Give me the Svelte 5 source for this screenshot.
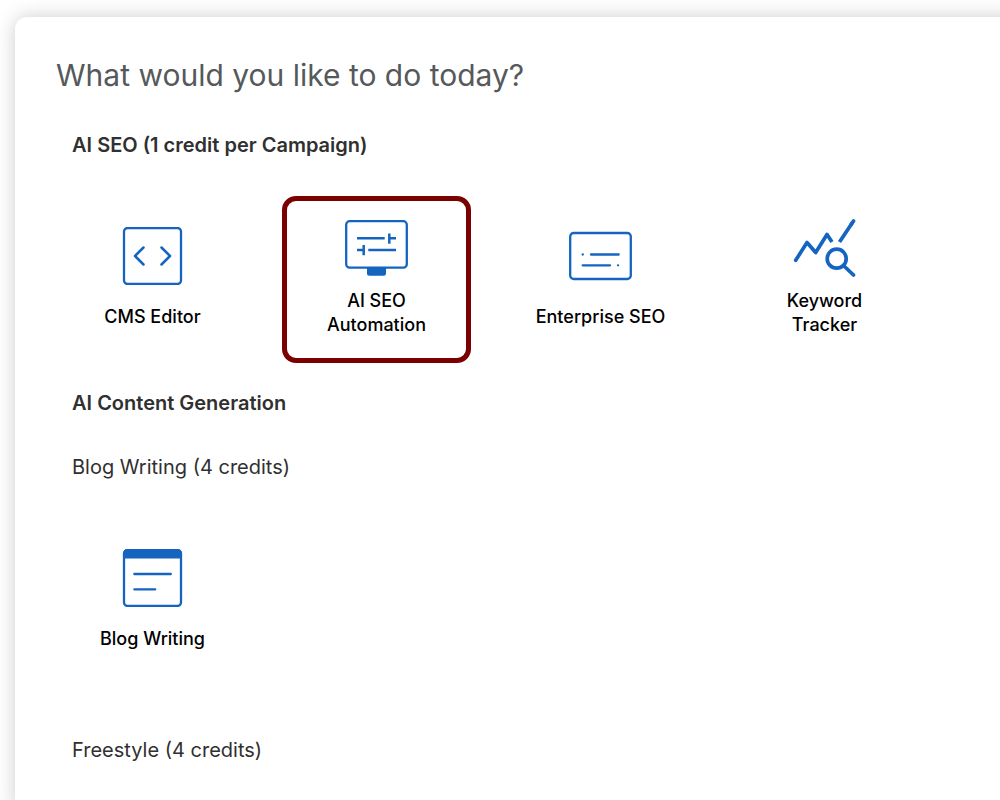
<script>
  const seoTools = [
    { id: 'cms', label: 'CMS Editor' },
    { id: 'automation', label: 'AI SEO Automation' },
    { id: 'enterprise', label: 'Enterprise SEO' },
    { id: 'keyword', label: 'Keyword Tracker' }
  ];

  const blogTools = [{ id: 'blog', label: 'Blog Writing' }];

  let selected = $state('automation');
</script>

{#snippet icon(id)}
  <svg class="icon" viewBox="0 0 63 58" aria-hidden="true">
    {#if id === 'cms'}
      <rect x="3" y="1" width="57" height="56" rx="3.5" />
      <path d="M22.5 20.5 14 29l8.5 8.5M40.5 20.5 49 29l-8.5 8.5" stroke-width="2.5" />
    {:else if id === 'automation'}
      <rect x="1.2" y="2.2" width="60.6" height="46.5" rx="3.5" />
      <path class="butt" d="M12 19.3h27.7M44.3 14.5v10.2M44.3 19.3H51M12 31h6.7M18.7 26v10.2M23.3 31H51" stroke-width="2.5" />
      <path class="solid" d="M22 48h19v6.5a2.2 2.2 0 0 1-2.2 2.2H24.2A2.2 2.2 0 0 1 22 54.5z" />
    {:else if id === 'enterprise'}
      <rect x="1.2" y="6" width="60.6" height="46" rx="3.5" />
      <path d="M13.7 27.5h.1M22 27.5h27.7M13.7 38.3H41M49 38.3h.1" />
    {:else if id === 'keyword'}
      <path d="M2.7 41.3 14 23.5l8.7 10L34 15.5" stroke-width="3.7" />
      <path class="butt" d="M34 15.5l5 7.5M46.5 23 59.5 3.5" stroke-width="3.7" />
      <path d="M58 5.7 60.5 2" stroke-width="3.7" />
      <circle cx="43.7" cy="39.7" r="9.5" stroke-width="3.7" />
      <path d="M51 47l9.5 9" stroke-width="3.7" />
    {:else if id === 'blog'}
      <rect x="3" y="1" width="57" height="56" rx="3.5" />
      <path class="solid" d="M2 9.5v-5A4.5 4.5 0 0 1 6.5 0h50A4.5 4.5 0 0 1 61 4.5v5z" />
      <path d="M13.3 25h36.5M13.3 40.3h21" />
    {/if}
  </svg>
{/snippet}

{#snippet tiles(tools)}
  <div class="tiles">
    {#each tools as tool}
      <button
        type="button"
        class="tile"
        class:selected={selected === tool.id}
        aria-pressed={selected === tool.id}
        onclick={() => (selected = tool.id)}
      >
        <span class="tile-icon">{@render icon(tool.id)}</span>
        <span class="tile-label">{tool.label}</span>
      </button>
    {/each}
  </div>
{/snippet}

<main class="card">
  <h1>What would you like to do today?</h1>

  <section>
    <h2>AI SEO (1 credit per Campaign)</h2>
    {@render tiles(seoTools)}
  </section>

  <section>
    <h2>AI Content Generation</h2>
    <h3>Blog Writing (4 credits)</h3>
    {@render tiles(blogTools)}
    <h3 class="next-group">Freestyle (4 credits)</h3>
  </section>
</main>

<style>
  :global(body) {
    margin: 0;
    background: #fff;
    overflow-x: hidden;
  }

  .card {
    box-sizing: border-box;
    min-height: calc(100vh - 17px);
    /* the right edge runs out of the window, shadow included */
    margin: 17px -32px 0 15px;
    padding: 38px 32px 24px 41px;
    border-radius: 12px;
    background: #fff;
    box-shadow: 0 0 20px rgba(0, 0, 0, 0.2);
    font-family: Inter, 'Liberation Sans', sans-serif;
    color: #303030;
  }

  h1 {
    margin: 0 0 38px;
    font-size: 30px;
    font-weight: 400;
    line-height: 40px;
    color: #55595c;
  }

  section {
    margin-bottom: 28px;
  }

  h2,
  h3 {
    margin: 0;
    padding-left: 16px;
    font-size: 20px;
    line-height: 24px;
  }

  h2 {
    font-weight: 600;
  }

  h3 {
    margin-top: 40px;
    font-weight: 400;
  }

  .next-group {
    margin-top: 53px;
  }

  .tiles {
    display: grid;
    grid-template-columns: repeat(auto-fill, 189px);
    gap: 35px;
    margin-top: 39px;
    padding-left: 2px;
  }

  .tile {
    display: flex;
    flex-direction: column;
    box-sizing: border-box;
    min-height: 167px;
    padding: 15px 20px 21px;
    border: 5px solid transparent;
    border-radius: 14px;
    background: none;
    font: inherit;
    color: #000;
    cursor: pointer;
  }

  .tile.selected {
    border-color: #7b0000;
  }

  .tile-icon {
    display: flex;
    flex: 1;
    align-items: center;
    align-self: center;
  }

  .icon {
    display: block;
    width: 63px;
    height: 58px;
    fill: none;
    stroke: #1565c0;
    stroke-width: 2.3;
    stroke-linecap: round;
    stroke-linejoin: round;
  }

  .icon .butt {
    stroke-linecap: butt;
  }

  .icon .solid {
    fill: #1565c0;
    stroke: none;
  }

  .tile-label {
    box-sizing: border-box;
    width: 100%;
    min-height: 41px;
    padding-top: 9px;
    font-size: 18px;
    font-weight: 500;
    line-height: 24px;
    text-align: center;
  }
</style>
